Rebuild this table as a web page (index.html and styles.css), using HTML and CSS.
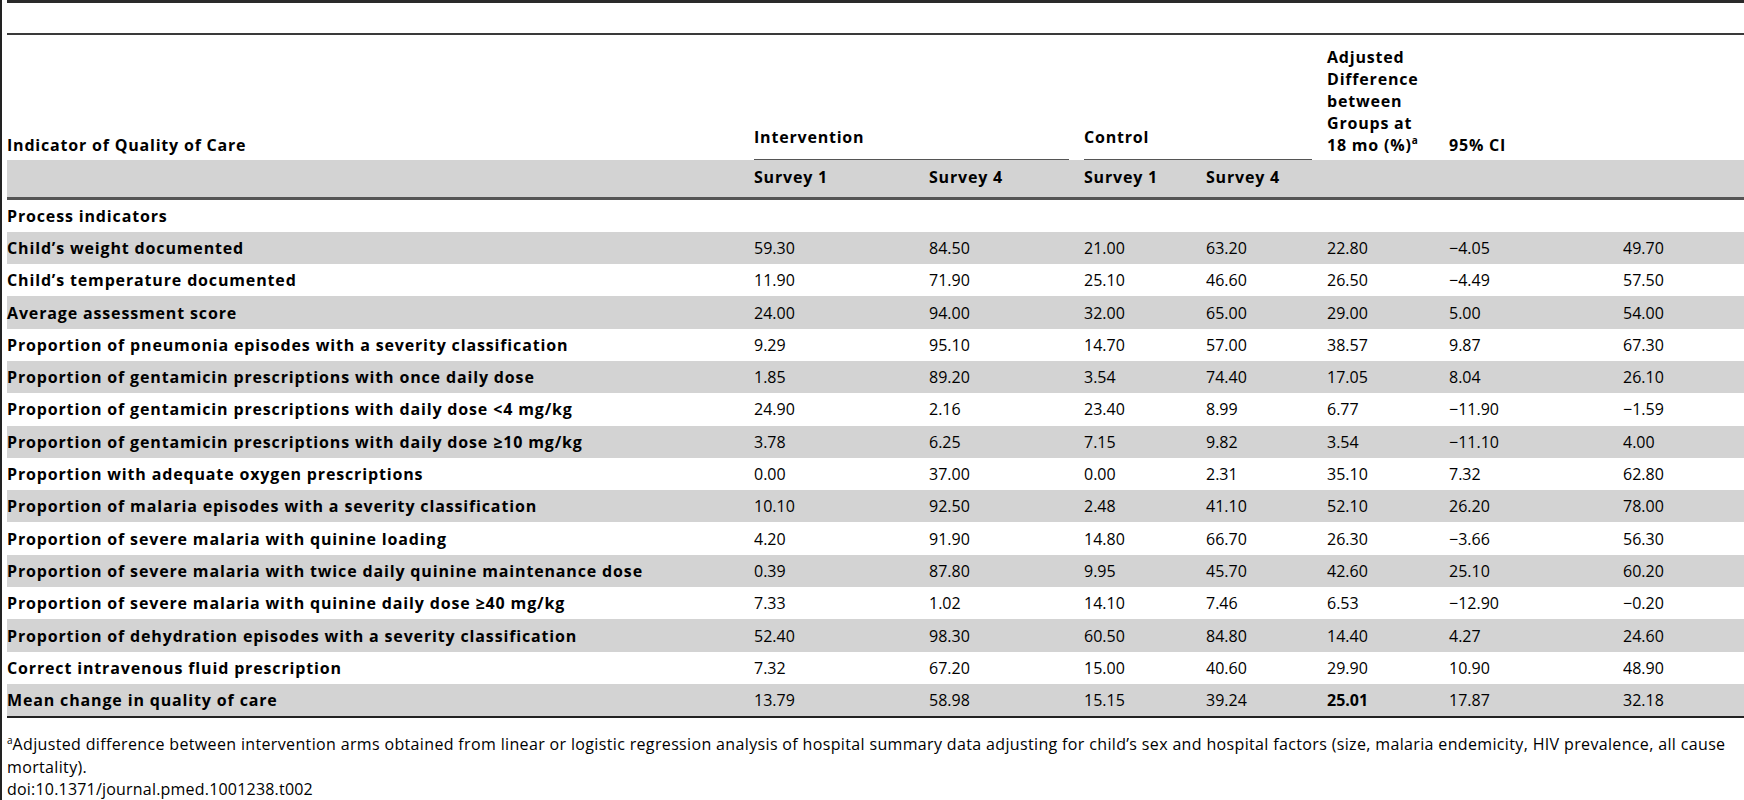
FILE: index.html
```html
<!DOCTYPE html>
<html lang="en">
<head>
    <meta charset="UTF-8">
    <title>Quality of care indicators</title>
    <link rel="stylesheet" href="styles.css">
</head>
<body>

    <div class="page">
        <table class="results">
            <colgroup>
                <col class="c-label">
                <col class="c-int1">
                <col class="c-int4">
                <col class="c-con1">
                <col class="c-con4">
                <col class="c-adj">
                <col class="c-ci1">
                <col class="c-ci2">
            </colgroup>
            <thead>
                <tr class="title-row">
                    <th colspan="8"></th>
                </tr>
                <tr class="head-main">
                    <th>Indicator of Quality of Care</th>
                    <th colspan="2" class="group"><div>Intervention</div></th>
                    <th colspan="2" class="group"><div>Control</div></th>
                    <th>Adjusted<br>Difference<br>between<br>Groups at<br>18 mo (%)<sup>a</sup></th>
                    <th colspan="2">95% CI</th>
                </tr>
                <tr class="head-sub">
                    <th></th>
                    <th>Survey 1</th>
                    <th>Survey 4</th>
                    <th>Survey 1</th>
                    <th>Survey 4</th>
                    <th></th>
                    <th></th>
                    <th></th>
                </tr>
            </thead>
            <tbody id="linhas">
                <tr>
                    <td class="label">Process indicators</td>
                    <td></td><td></td><td></td><td></td><td></td><td></td><td></td>
                </tr>
                <!-- linhas de dados geradas abaixo -->
            </tbody>
        </table>

        <div class="nota">
            <p class="texto"><sup>a</sup>Adjusted difference between intervention arms obtained from linear or logistic regression analysis of hospital summary data adjusting for child’s sex and hospital factors (size, malaria endemicity, HIV prevalence, all cause mortality).</p>
            <p class="doi">doi:10.1371/journal.pmed.1001238.t002</p>
        </div>
    </div>

    <script src="script.js"></script>
</body>
</html>
```

FILE: script.js
```js
// Dados da tabela: rótulo + 7 valores
const dados = [
    ["Child’s weight documented", "59.30", "84.50", "21.00", "63.20", "22.80", "−4.05", "49.70"],
    ["Child’s temperature documented", "11.90", "71.90", "25.10", "46.60", "26.50", "−4.49", "57.50"],
    ["Average assessment score", "24.00", "94.00", "32.00", "65.00", "29.00", "5.00", "54.00"],
    ["Proportion of pneumonia episodes with a severity classification", "9.29", "95.10", "14.70", "57.00", "38.57", "9.87", "67.30"],
    ["Proportion of gentamicin prescriptions with once daily dose", "1.85", "89.20", "3.54", "74.40", "17.05", "8.04", "26.10"],
    ["Proportion of gentamicin prescriptions with daily dose <4 mg/kg", "24.90", "2.16", "23.40", "8.99", "6.77", "−11.90", "−1.59"],
    ["Proportion of gentamicin prescriptions with daily dose ≥10 mg/kg", "3.78", "6.25", "7.15", "9.82", "3.54", "−11.10", "4.00"],
    ["Proportion with adequate oxygen prescriptions", "0.00", "37.00", "0.00", "2.31", "35.10", "7.32", "62.80"],
    ["Proportion of malaria episodes with a severity classification", "10.10", "92.50", "2.48", "41.10", "52.10", "26.20", "78.00"],
    ["Proportion of severe malaria with quinine loading", "4.20", "91.90", "14.80", "66.70", "26.30", "−3.66", "56.30"],
    ["Proportion of severe malaria with twice daily quinine maintenance dose", "0.39", "87.80", "9.95", "45.70", "42.60", "25.10", "60.20"],
    ["Proportion of severe malaria with quinine daily dose ≥40 mg/kg", "7.33", "1.02", "14.10", "7.46", "6.53", "−12.90", "−0.20"],
    ["Proportion of dehydration episodes with a severity classification", "52.40", "98.30", "60.50", "84.80", "14.40", "4.27", "24.60"],
    ["Correct intravenous fluid prescription", "7.32", "67.20", "15.00", "40.60", "29.90", "10.90", "48.90"],
    ["Mean change in quality of care", "13.79", "58.98", "15.15", "39.24", "25.01", "17.87", "32.18"]
];

const corpo = document.getElementById("linhas");

dados.forEach((linha, i) => {
    const tr = document.createElement("tr");
    if (i % 2 === 0) tr.className = "cinza";
    linha.forEach((valor, j) => {
        const td = document.createElement("td");
        td.textContent = valor;
        if (j === 0) td.className = "label";
        // destaque do resultado principal
        if (i === dados.length - 1 && j === 5) td.className = "destaque";
        tr.appendChild(td);
    });
    corpo.appendChild(tr);
});
```

FILE: styles.css
```css
body {
    margin: 0;
    padding: 0;
    font-family: "Open Sans", "Liberation Sans", Arial, sans-serif;
    font-size: 16px;
    color: #000;
    background: #fff;
}

.page {
    min-height: 100vh;
    border-left: 2px solid #222;
    padding-left: 5px;
    box-sizing: border-box;
}

.results {
    width: 100%;
    table-layout: fixed;
    border-collapse: separate;
    border-spacing: 0;
}

.c-label { width: 747px; }
.c-int1 { width: 175px; }
.c-int4 { width: 155px; }
.c-con1 { width: 122px; }
.c-con4 { width: 121px; }
.c-adj { width: 122px; }
.c-ci1 { width: 174px; }
.c-ci2 { width: 121px; }

.results th, .results td {
    padding: 0 15px 0 0;
    text-align: left;
    line-height: 22px;
}

.results th {
    font-weight: bold;
    letter-spacing: 0.8px;
}

.title-row th {
    height: 30px;
    border-top: 3px solid #2a2a2a;
    border-bottom: 2px solid #3a3a3a;
}

.head-main th {
    height: 121px;
    vertical-align: bottom;
    padding-bottom: 4px;
}

.head-main th.group {
    padding-bottom: 0;
}

.head-main th.group div {
    padding-bottom: 11px;
    border-bottom: 1px solid #555;
}

sup {
    font-size: 10px;
    line-height: 0;
    letter-spacing: 0;
    vertical-align: 7px;
}

.head-sub th {
    height: 34.5px;
    background-color: #d3d3d3;
    border-bottom: 3px solid #555;
    vertical-align: middle;
    padding-bottom: 2px;
}

.results td {
    height: 32.3px;
    vertical-align: middle;
}

.results td.label {
    font-weight: bold;
    letter-spacing: 0.85px;
}

.results td.destaque {
    font-weight: bold;
}

.results tr.cinza td {
    background-color: #d3d3d3;
}

.results tbody tr:last-child td {
    border-bottom: 2px solid #222;
}

.nota {
    padding-top: 15px;
}

.nota p {
    margin: 0;
    line-height: 22.5px;
}

.nota .texto {
    letter-spacing: 0.35px;
}

.nota .doi {
    letter-spacing: 0.2px;
}

.nota sup {
    vertical-align: 6px;
}
```
